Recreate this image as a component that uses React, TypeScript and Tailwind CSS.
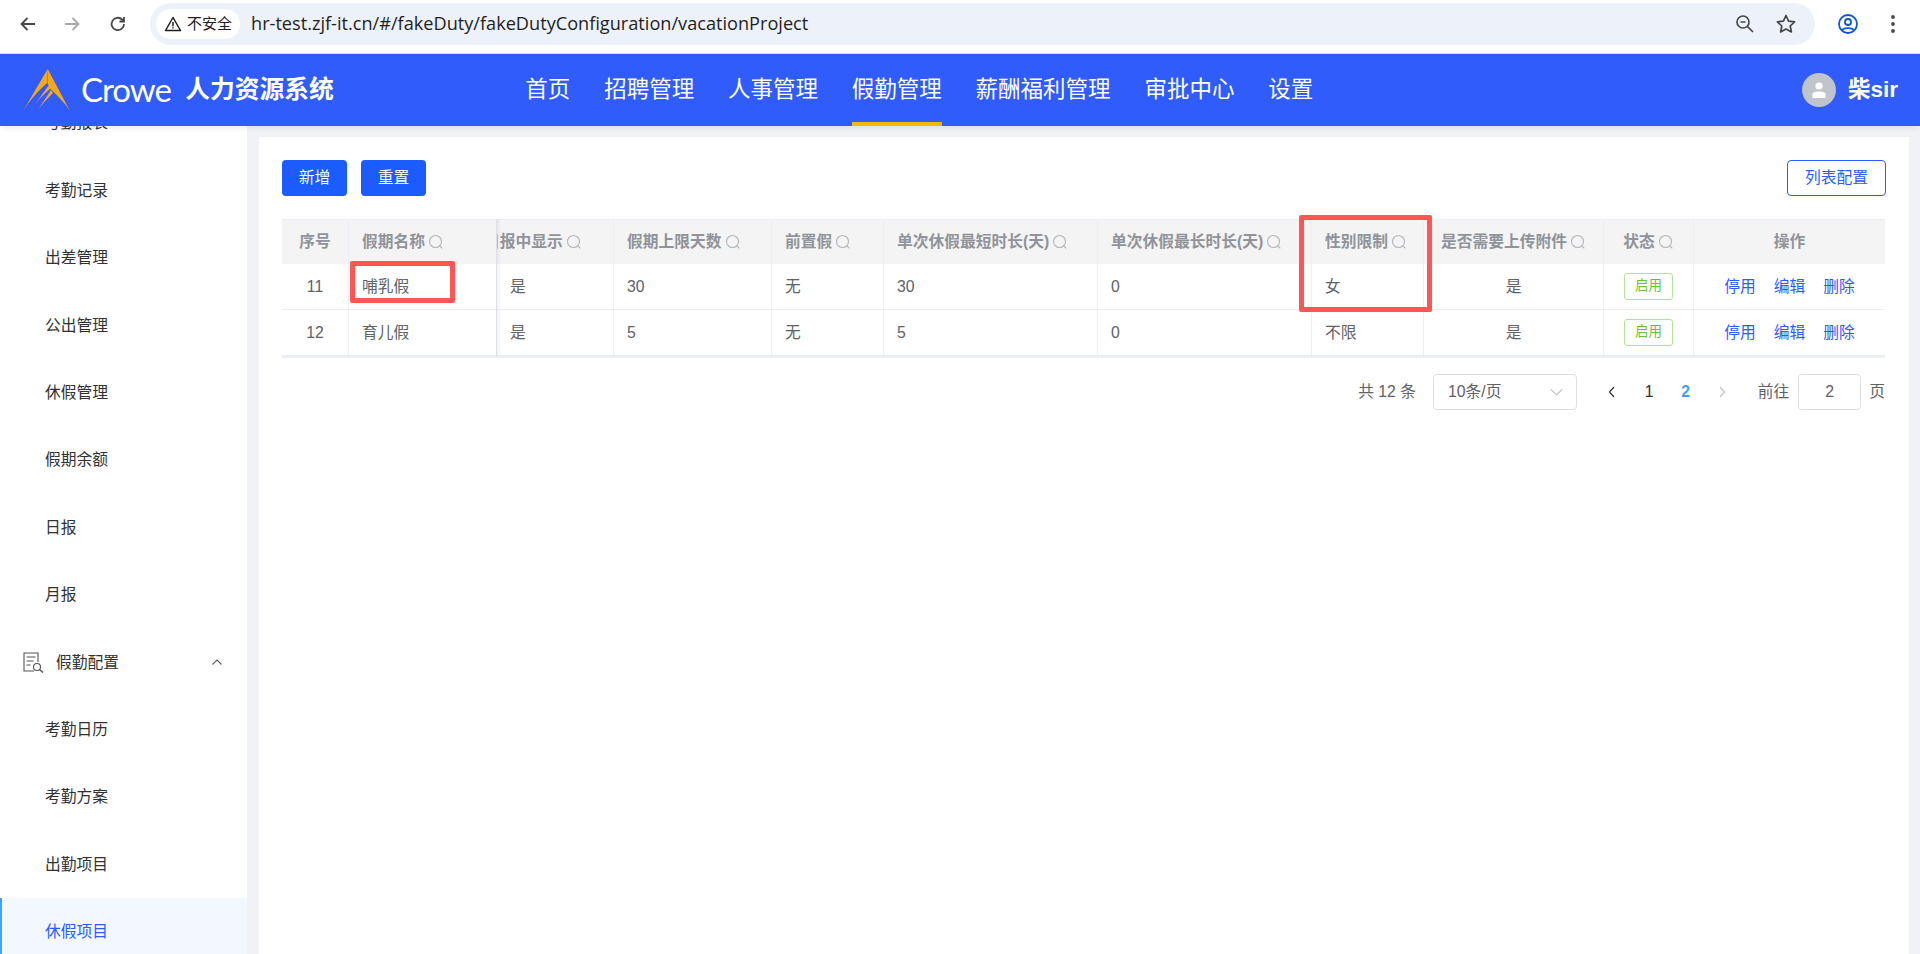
import React from 'react';

const cols = 'grid grid-cols-[67px_148px_117px_158px_112px_214px_214px_112px_180px_90px_191px]';

function Q() {
  return (
    <svg width="16" height="16" viewBox="0 0 16 16" fill="none" stroke="#b4b6bb" strokeWidth="1.1" className="ml-[3px] shrink-0">
      <circle cx="7.5" cy="7.5" r="6" />
      <path d="M11.8 11.8L14 14" strokeLinecap="round" />
    </svg>
  );
}

function Head({ t, center, pull, last, q = true }: { t: string; center?: boolean; pull?: boolean; last?: boolean; q?: boolean }) {
  return (
    <div className={`flex h-[44px] items-center overflow-hidden whitespace-nowrap border-[#ebeef5] text-[15.75px] font-bold text-[#909399] ${last ? '' : 'border-r'} ${center ? 'justify-center' : pull ? '' : 'pl-[13px]'}`}>
      {pull ? <span className="ml-[-13px]">{t}</span> : <span>{t}</span>}
      {q && <Q />}
    </div>
  );
}

function Cell({ children, center, last, pad = 'pl-[13px]' }: { children: React.ReactNode; center?: boolean; last?: boolean; pad?: string }) {
  return (
    <div className={`flex h-[46px] items-center whitespace-nowrap border-b border-[#ebeef5] text-[15.75px] text-[#606266] ${last ? '' : 'border-r'} ${center ? 'justify-center' : pad}`}>
      {children}
    </div>
  );
}

function Row({ id, name, days, min, sex }: { id: string; name: string; days: string; min: string; sex: string }) {
  return (
    <div className={cols}>
      <Cell center>{id}</Cell>
      <Cell>{name}</Cell>
      <Cell>是</Cell>
      <Cell>{days}</Cell>
      <Cell>无</Cell>
      <Cell>{min}</Cell>
      <Cell>0</Cell>
      <Cell>{sex}</Cell>
      <Cell center>是</Cell>
      <Cell center>
        <span className="flex h-[27px] w-[49px] items-center justify-center rounded-[3px] border border-[#b3e19d] bg-white text-[13.5px] text-[#67c23a]">启用</span>
      </Cell>
      <Cell center last>
        <span className="flex gap-[18px] text-[#2a5cff]">
          <span>停用</span><span>编辑</span><span>删除</span>
        </span>
      </Cell>
    </div>
  );
}

const topItems = ['考勤报表', '考勤记录', '出差管理', '公出管理', '休假管理', '假期余额', '日报', '月报'];
const subItems = ['考勤日历', '考勤方案', '出勤项目'];
const nav = ['首页', '招聘管理', '人事管理', '假勤管理', '薪酬福利管理', '审批中心', '设置'];

function Logo() {
  return (
    <svg width="48" height="45" viewBox="0 0 48 45" className="shrink-0" fill="#f5a81c">
      <path d="M24.7 1 L47 43 C41 34 34 27 27.500 21 L24.500 15Z" />
      <path d="M24.700 1 L0 43 C6 33 14 24 24 15Z" />
      <path d="M26 17 L7 43 C12 35 19 28 28 20Z" />
      <path d="M28 22 L14 43 C18 37 23 32 30 25Z" />
    </svg>
  );
}

export default function App() {
  return (
    <div className="flex h-[954px] w-[1920px] flex-col overflow-hidden bg-white font-['Liberation_Sans','Noto_Sans_CJK_SC',sans-serif]">
      {/* browser chrome */}
      <div className="flex h-[54px] shrink-0 items-center border-b border-[#dfe3ea] bg-white pb-[5px]">
        <svg width="20" height="20" viewBox="0 0 20 20" fill="none" stroke="#474747" strokeWidth="1.8" className="ml-[18px]">
          <path d="M17 10H4M9.500 4L3.500 10l6 6" />
        </svg>
        <svg width="20" height="20" viewBox="0 0 20 20" fill="none" stroke="#a8a8a8" strokeWidth="1.8" className="ml-[24px]">
          <path d="M3 10h13M10.500 4l6 6-6 6" />
        </svg>
        <svg width="20" height="20" viewBox="0 0 20 20" fill="none" stroke="#474747" strokeWidth="1.8" className="ml-[26px]">
          <path d="M16 10a6.200 6.200 0 1 1-1.800-4.400L16 7.400M16 3v4.500h-4.500" />
        </svg>
        <div className="ml-[22px] flex h-[42px] w-[1665px] items-center rounded-full bg-[#edf2fa] pl-[6px] pr-[18px]">
          <div className="flex h-[30px] w-[84px] items-center justify-center rounded-full bg-white text-[15px] text-[#1f1f1f]">
            <svg width="18" height="18" viewBox="0 0 18 18" fill="none" stroke="#1f1f1f" strokeWidth="1.5" className="mr-[5px]">
              <path d="M9 2.500L16.500 15.500H1.500Z" strokeLinejoin="round" />
              <path d="M9 7v4.200M9 12.300v1.300" />
            </svg>
            不安全
          </div>
          <span className="ml-[11px] font-['Open_Sans',sans-serif] text-[18.15px] text-[#1f1f1f]">hr-test.zjf-it.cn/#/fakeDuty/fakeDutyConfiguration/vacationProject</span>
          <svg width="22" height="22" viewBox="0 0 22 22" fill="none" stroke="#474747" strokeWidth="1.7" className="ml-auto">
            <circle cx="9" cy="9" r="6" />
            <path d="M13.500 13.500L19 19M6.500 9h5" />
          </svg>
          <svg width="22" height="22" viewBox="0 0 22 22" fill="none" stroke="#474747" strokeWidth="1.7" className="ml-[19px]">
            <path d="M11 2.500l2.600 5.600 6 .7-4.400 4.200 1.200 6L11 16l-5.400 3 1.200-6-4.400-4.200 6-.7Z" strokeLinejoin="round" />
          </svg>
        </div>
        <svg width="22" height="22" viewBox="0 0 22 22" fill="none" stroke="#0b57d0" strokeWidth="1.8" className="ml-[22px]">
          <circle cx="11" cy="11" r="9" />
          <circle cx="11" cy="9" r="3" />
          <path d="M5.500 17c1.500-2.500 9.500-2.500 11 0" />
        </svg>
        <svg width="6" height="20" viewBox="0 0 6 20" fill="#474747" className="ml-[31px]">
          <circle cx="3" cy="3" r="1.900" /><circle cx="3" cy="10" r="1.900" /><circle cx="3" cy="17" r="1.900" />
        </svg>
      </div>

      {/* app header */}
      <header className="relative z-20 flex h-[72px] shrink-0 items-center bg-[#2f5cfa] text-white shadow-[0_2px_6px_rgba(0,0,0,0.08)]">
        <div className="ml-[23px]"><Logo /></div>
        <span className="ml-[10px] font-['Lato',sans-serif] text-[33px] font-normal tracking-[-1px]">Crowe</span>
        <span className="ml-[14.5px] text-[24.75px] font-bold">人力资源系统</span>
        <nav className="ml-[191.5px] flex h-full gap-[33.8px]">
          {nav.map((n, i) => (
            <div key={n} className={`flex h-full items-center border-b-4 pt-[4px] text-[22.5px] ${i === 3 ? 'border-[#f5b70a]' : 'border-transparent'}`}>{n}</div>
          ))}
        </nav>
        <div className="ml-auto flex items-center pr-[22px]">
          <div className="flex h-[34px] w-[34px] items-center justify-center rounded-full bg-[#c0c4cc]">
            <svg width="16" height="18" viewBox="0 0 16 18" fill="#fff">
              <circle cx="8" cy="5" r="3.600" /><path d="M1.500 17v-3.500c0-2 2-3 6.500-3s6.500 1 6.500 3V17Z" />
            </svg>
          </div>
          <span className="ml-[12px] text-[22.5px] font-bold">柴sir</span>
        </div>
      </header>

      <div className="flex min-h-0 flex-1 bg-[#f0f2f5]">
        {/* sidebar */}
        <aside className="w-[247px] shrink-0 overflow-hidden bg-white text-[15.75px] text-[#303133]">
          <div className="mt-[-36.5px]">
            {topItems.map((t) => (
              <div key={t} className="flex h-[67.4px] items-center pl-[45px]">{t}</div>
            ))}
            <div className="flex h-[67.4px] items-center pl-[23px]">
              <svg width="21" height="21" viewBox="0 0 21 21" fill="none" stroke="#555" strokeWidth="1.100">
                <path d="M15 10V1H1v18h10" />
                <path d="M3.500 5h9M3.500 9h7M3.500 13h4" />
                <circle cx="14" cy="15" r="3.500" />
                <path d="M16.500 17.500L20 20.500" strokeWidth="1.500" />
              </svg>
              <span className="ml-[12px]">假勤配置</span>
              <svg width="12" height="8" viewBox="0 0 12 8" fill="none" stroke="#606266" strokeWidth="1.100" className="ml-[92px]">
                <path d="M1.500 6.500L6 2l4.500 4.500" />
              </svg>
            </div>
            {subItems.map((t) => (
              <div key={t} className="flex h-[67.4px] items-center pl-[45px]">{t}</div>
            ))}
            <div className="flex h-[67.4px] items-center border-l-2 border-[#409eff] bg-[#f3f8ff] pl-[43px] text-[#2a5cff]">休假项目</div>
          </div>
        </aside>

        {/* content */}
        <main className="min-w-0 flex-1 pl-[12px] pr-[11px] pt-[11px]">
          <div className="relative h-full bg-white px-[23px] pt-[23px]">
            <div className="flex h-9 items-center text-[15.75px]">
              <button className="h-9 w-[65px] rounded-[4px] bg-[#1a5cff] text-white">新增</button>
              <button className="ml-[14px] h-9 w-[65px] rounded-[4px] bg-[#1a5cff] text-white">重置</button>
              <button className="ml-auto h-9 w-[99px] rounded-[4px] border border-[#2a5cff] bg-white text-[#2a5cff]">列表配置</button>
            </div>

            <div className="relative mt-[23px] w-[1603px] border-b-2 border-[#ebeef5]">
              <div className={`${cols} border-t border-[#ebeef5] bg-[#f4f4f5]`}>
                <Head t="序号" center q={false} />
                <Head t="假期名称" />
                <Head t="日报中显示" pull />
                <Head t="假期上限天数" />
                <Head t="前置假" />
                <Head t="单次休假最短时长(天)" />
                <Head t="单次休假最长时长(天)" />
                <Head t="性别限制" />
                <Head t="是否需要上传附件" center />
                <Head t="状态" center />
                <Head t="操作" center last q={false} />
              </div>
              <Row id="11" name="哺乳假" days="30" min="30" sex="女" />
              <Row id="12" name="育儿假" days="5" min="5" sex="不限" />
              <div className="absolute bottom-0 left-[214px] top-0 z-10 w-[5px] bg-gradient-to-r from-black/[0.07] to-transparent" />
              <div className="absolute left-[68px] top-[42px] z-20 h-[42px] w-[105px] rounded-[2px] border-[5px] border-[#ff5555]" />
              <div className="absolute left-[1017px] top-[-4px] z-20 h-[97px] w-[133px] rounded-[2px] border-[5px] border-[#ff5555]" />
            </div>

            <div className="mt-[16px] flex w-[1603px] items-center justify-end text-[15.75px] text-[#606266]">
              <span>共 12 条</span>
              <div className="ml-[17px] flex h-9 w-[144px] items-center justify-between rounded-[4px] border border-[#dcdfe6] pl-[14px] pr-[13px]">
                <span>10条/页</span>
                <svg width="13" height="8" viewBox="0 0 13 8" fill="none" stroke="#c0c4cc" strokeWidth="1.100"><path d="M1 1.500l5.500 5.500L12 1.500" /></svg>
              </div>
              <div className="ml-[17px] flex">
                <span className="flex h-9 w-[36.7px] items-center justify-center">
                  <svg width="8" height="12" viewBox="0 0 8 12" fill="none" stroke="#303133" strokeWidth="1.200"><path d="M6 1L1.500 6 6 11" /></svg>
                </span>
                <span className="flex h-9 w-[36.7px] items-center justify-center text-[#303133]">1</span>
                <span className="flex h-9 w-[36.7px] items-center justify-center font-bold text-[#409eff]">2</span>
                <span className="flex h-9 w-[36.7px] items-center justify-center">
                  <svg width="8" height="12" viewBox="0 0 8 12" fill="none" stroke="#c0c4cc" strokeWidth="1.200"><path d="M2 1l4.500 5L2 11" /></svg>
                </span>
              </div>
              <span className="ml-[17px]">前往</span>
              <div className="ml-[9px] flex h-9 w-[63px] items-center justify-center rounded-[4px] border border-[#dcdfe6]">2</div>
              <span className="ml-[8px]">页</span>
            </div>
          </div>
        </main>
      </div>
    </div>
  );
}
